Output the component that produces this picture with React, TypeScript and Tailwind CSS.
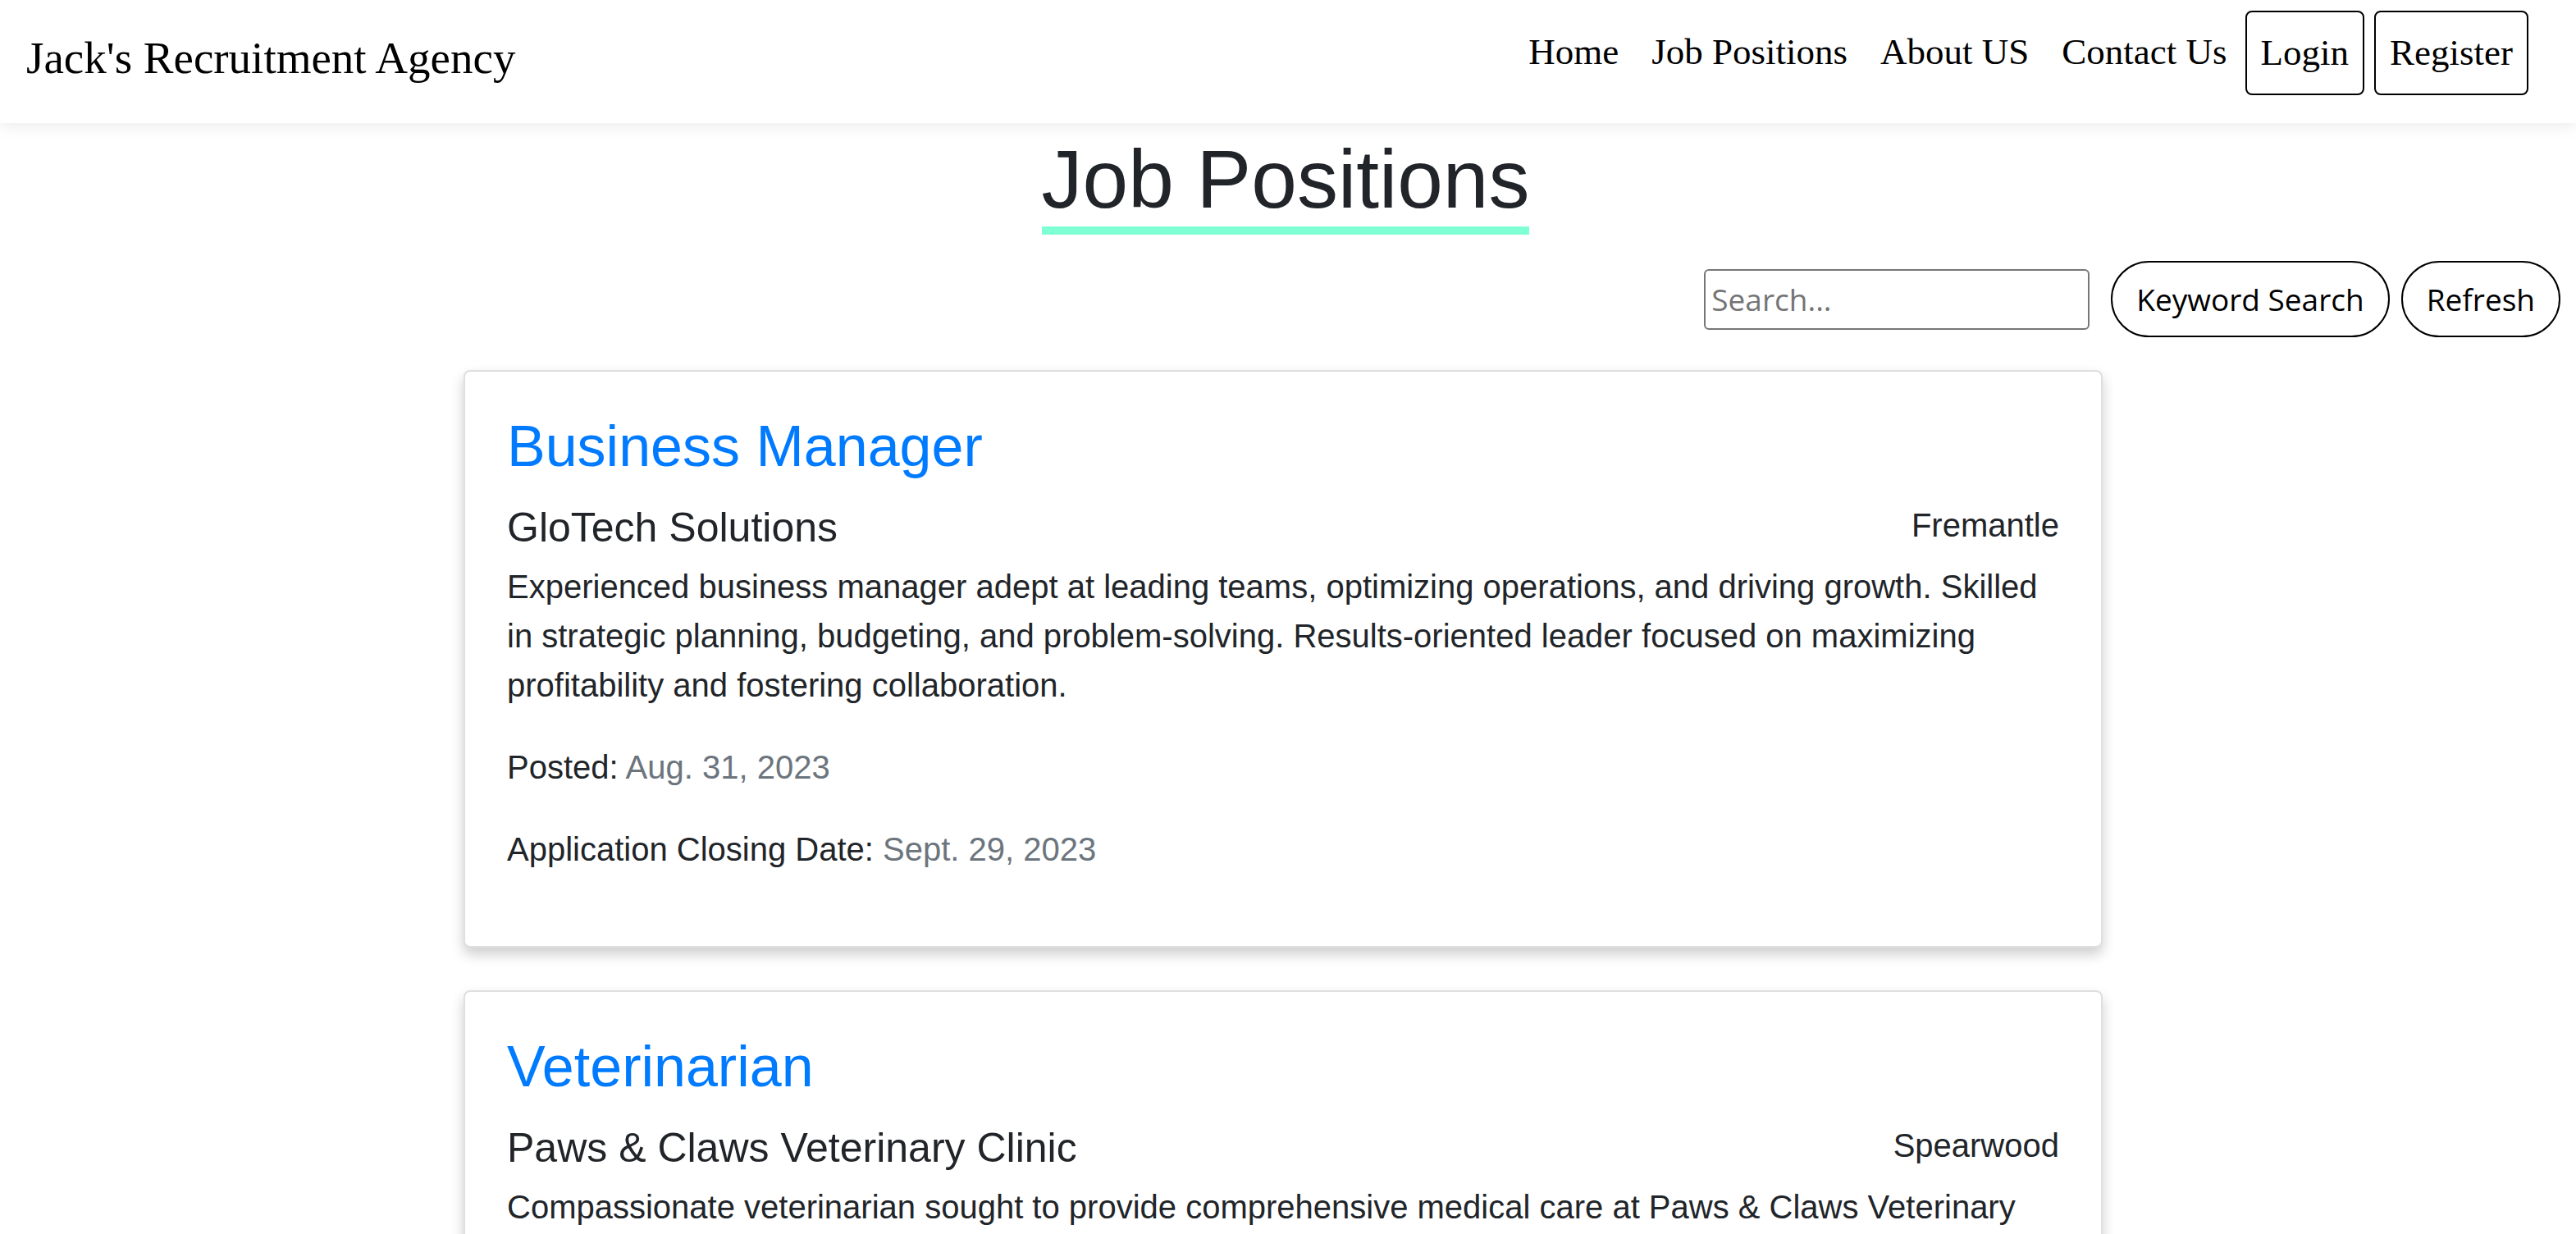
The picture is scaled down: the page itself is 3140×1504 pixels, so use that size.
import React from 'react';

type Job = {
  title: string;
  company: string;
  location: string;
  description: string;
  posted: string;
  closing: string;
};

const jobs: Job[] = [
  {
    title: 'Business Manager',
    company: 'GloTech Solutions',
    location: 'Fremantle',
    description:
      'Experienced business manager adept at leading teams, optimizing operations, and driving growth. Skilled in strategic planning, budgeting, and problem-solving. Results-oriented leader focused on maximizing profitability and fostering collaboration.',
    posted: 'Aug. 31, 2023',
    closing: 'Sept. 29, 2023',
  },
  {
    title: 'Veterinarian',
    company: 'Paws & Claws Veterinary Clinic',
    location: 'Spearwood',
    description:
      'Compassionate veterinarian sought to provide comprehensive medical care at Paws & Claws Veterinary Clinic. Diagnose, treat and prevent illness in companion animals while educating owners on responsible pet care.',
    posted: 'Sept. 2, 2023',
    closing: 'Oct. 6, 2023',
  },
];

const serif = "font-['Liberation_Serif',Georgia,serif]";
const sans = "font-['Liberation_Sans',Arial,sans-serif]";
const ui = "font-['Open_Sans','Noto_Sans',sans-serif]";

const navLinks = ['Home', 'Job Positions', 'About US', 'Contact Us'];

const JobCard: React.FC<{ job: Job }> = ({ job }) => (
  <div className="w-[1998px] ml-[565px] border-2 border-[#dfdfdf] rounded-[8px] bg-white shadow-[0_8px_16px_0_rgba(0,0,0,0.2)] pt-[49px] px-[51px] pb-[48px]">
    <h2 className="text-[70px] leading-[84px] text-[#007bff]">{job.title}</h2>
    <div className="flex justify-between items-start mt-[28px]">
      <span className="text-[50px] leading-[58px] text-[#212529]">{job.company}</span>
      <span className="text-[40px] leading-[48px] mt-[2px] text-[#212529]">{job.location}</span>
    </div>
    <p className="mt-[13px] mb-[40px] text-[40px] leading-[60px] text-[#212529]">{job.description}</p>
    <p className="mb-[40px] text-[40px] leading-[60px] text-[#212529]">
      Posted: <span className="text-[#6c757d]">{job.posted}</span>
    </p>
    <p className="mb-[40px] text-[40px] leading-[60px] text-[#212529]">
      Application Closing Date: <span className="text-[#6c757d]">{job.closing}</span>
    </p>
  </div>
);

export default function App() {
  return (
    <div className={`min-h-screen bg-white ${sans}`}>
      {/* Navbar */}
      <nav className="relative z-10 h-[150px] flex justify-between items-start pl-[32px] pr-[58px] bg-white shadow-[0_4px_18px_rgba(0,0,0,0.08)]">
        <span className={`${serif} mt-[43px] text-[55px] leading-none text-black`}>Jack's Recruitment Agency</span>
        <div className={`${serif} flex items-center mt-[13px] text-black`}>
          {navLinks.map(link => (
            <a key={link} href="#" className="px-[20px] mb-[2px] text-[45px] leading-none">
              {link}
            </a>
          ))}
          <button className="ml-[2px] h-[103px] px-[17px] border-2 border-black rounded-[8px] text-[45px] leading-none">
            Login
          </button>
          <button className="ml-[12px] h-[103px] px-[17px] border-2 border-black rounded-[8px] text-[45px] leading-none">
            Register
          </button>
        </div>
      </nav>

      <main className="pb-[60px]">
        <div className="flex justify-center mt-[11px] pr-[6px]">
          <h1 className="inline-block text-[100px] leading-[115px] text-[#212529] border-b-[10px] border-[#7fffd4]">
            Job Positions
          </h1>
        </div>

        {/* Search row */}
        <div className={`${ui} flex justify-end items-center mt-[32px] pr-[19px]`}>
          <input
            type="text"
            placeholder="Search..."
            className="w-[470px] h-[74px] px-[7px] border-2 border-[#767676] rounded-[6px] text-[37px] text-black placeholder:text-[#757575] outline-none"
          />
          <button className="ml-[26px] h-[93px] px-[29px] border-2 border-black rounded-full text-[37px] text-black">
            Keyword Search
          </button>
          <button className="ml-[14px] h-[93px] px-[29px] border-2 border-black rounded-full text-[37px] text-black">
            Refresh
          </button>
        </div>

        <div className="flex flex-col gap-[52px] mt-[40px]">
          {jobs.map(job => (
            <JobCard key={job.title} job={job} />
          ))}
        </div>
      </main>
    </div>
  );
}
